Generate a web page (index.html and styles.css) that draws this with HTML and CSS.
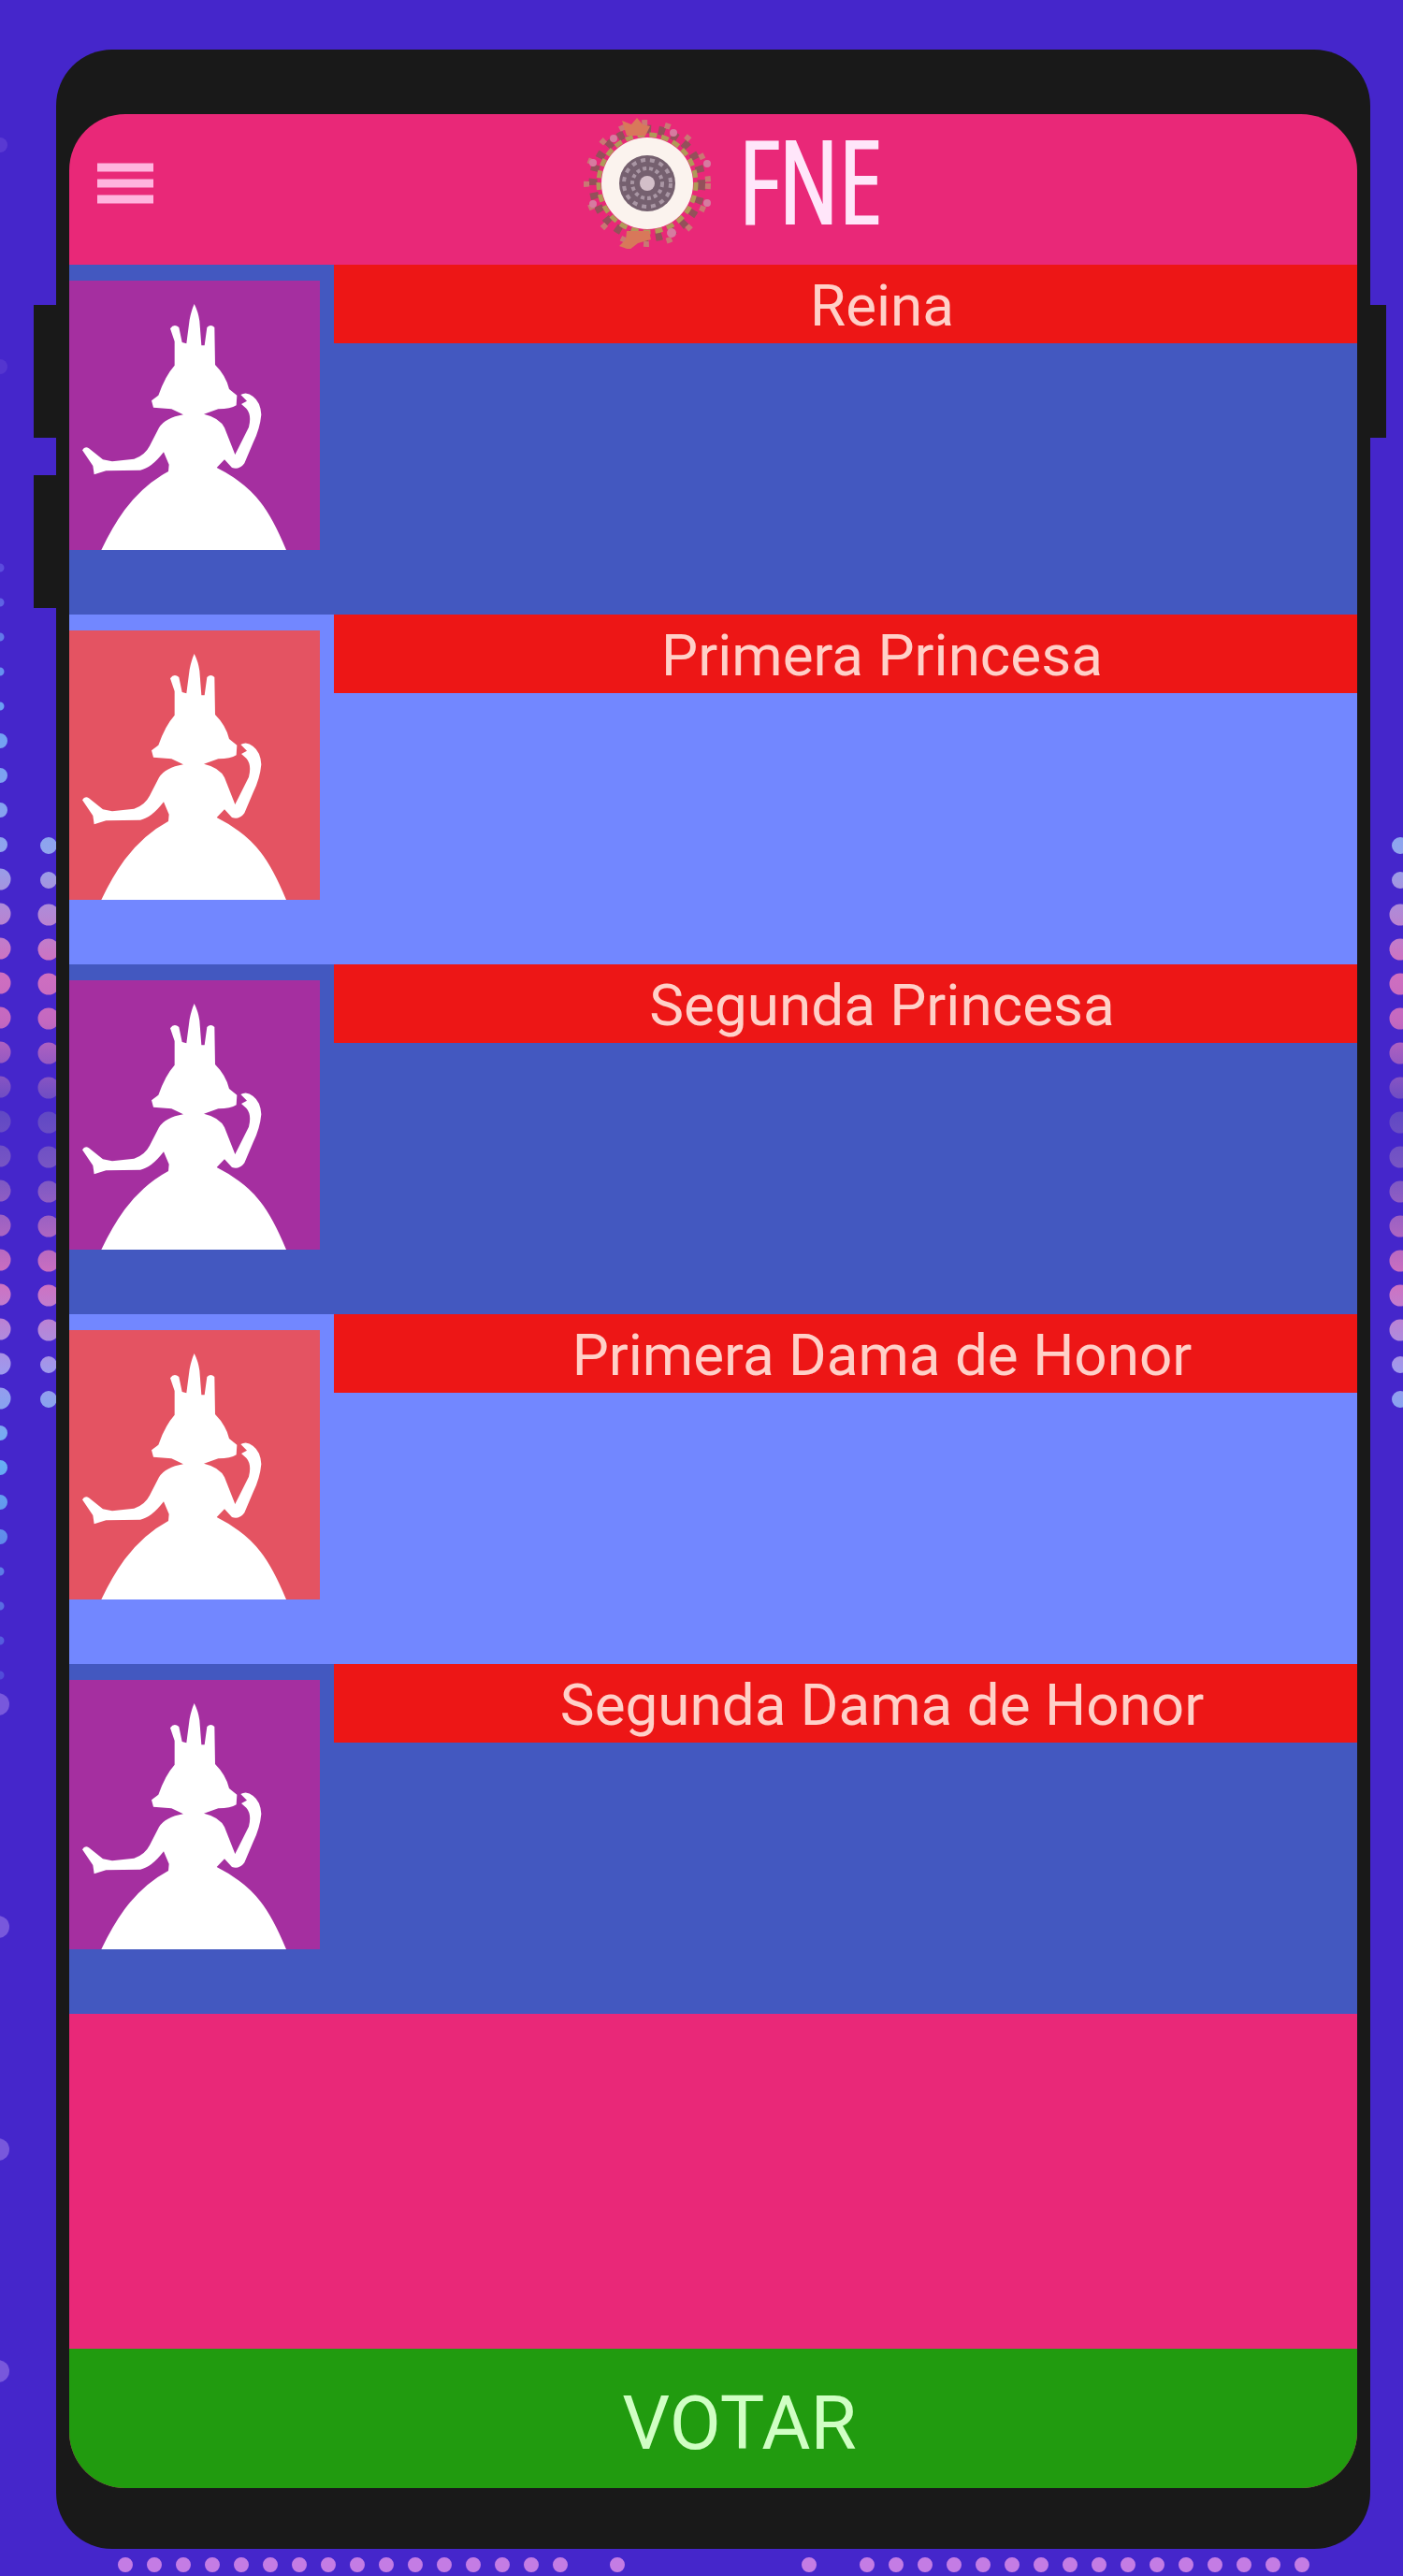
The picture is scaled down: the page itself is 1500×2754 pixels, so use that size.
FILE: index.html
```
<!DOCTYPE html>
<html lang="es">
<head>
  <meta charset="UTF-8" />
  <meta name="viewport" content="width=device-width, initial-scale=1.0"/>
  <title>FNE - Votar</title>
  <link rel="stylesheet" href="styles.css">
</head>
<body>
  <!-- Shared silhouette -->
  <svg class="defs" aria-hidden="true">
    <symbol id="queen" viewBox="42 90 804 864">
      <path fill="#fff" d="M443 165 Q456 190 460 220 L466 298 L476 298 L484 240 Q496 228 508 240 L510 360 Q545 395 555 438 L580 458 L578 490 Q560 502 520 502 L474 518 Q525 530 540 562 L574 648 L618 560 Q628 520 610 500 L594 486 L612 476 L592 456 Q612 444 632 462 Q656 480 658 520 Q654 565 632 610 L604 676 Q588 698 564 690 L540 664 L515 690 Q605 735 655 800 Q695 850 738 954 H145 Q180 880 220 825 Q280 745 360 702 L362 680 L345 640 Q305 692 270 698 L160 700 L122 712 L118 684 L84 634 Q92 620 105 628 L150 664 L180 670 L250 662 Q285 650 300 620 L330 562 Q350 530 408 520 L370 502 L312 497 L306 475 L328 458 Q350 395 380 362 L380 285 L366 244 Q378 226 394 240 L404 288 L418 292 L428 215 Q434 185 443 165 Z"/>
    </symbol>
  </svg>

  <!-- Dotted backdrop -->
  <svg class="dots dots-left" aria-hidden="true">
    <defs>
      <linearGradient id="fade" gradientUnits="userSpaceOnUse" x1="0" y1="600" x2="0" y2="1800">
        <stop offset="0" stop-color="#5a48dc"/>
        <stop offset="0.12" stop-color="#68a0f4"/>
        <stop offset="0.26" stop-color="#90a4ee"/>
        <stop offset="0.36" stop-color="#d070c0"/>
        <stop offset="0.41" stop-color="#c468c0"/>
        <stop offset="0.49" stop-color="#6048c4"/>
        <stop offset="0.55" stop-color="#7c58c4"/>
        <stop offset="0.64" stop-color="#d070c0"/>
        <stop offset="0.72" stop-color="#a098ec"/>
        <stop offset="0.8" stop-color="#68b0f4"/>
        <stop offset="1" stop-color="#5048d8"/>
      </linearGradient>
    </defs>
    <g fill="none" stroke="url(#fade)" stroke-linecap="round">
      <path stroke-width="9" stroke-dasharray="0 37" d="M0 607V760M0 1680V1800"/>
      <path stroke-width="16" stroke-dasharray="0 37" d="M0 792V904M0 1532V1650"/>
      <path stroke-width="23" stroke-dasharray="0 37" d="M0 940V1500"/>
      <path stroke-width="18" stroke-dasharray="0 37" d="M52 904V942M52 1459V1500"/>
      <path stroke-width="23" stroke-dasharray="0 37" d="M52 978V1430"/>
    </g>
    <g fill="#7858dc">
      <circle cx="0" cy="155" r="8" opacity="0.4"/>
      <circle cx="0" cy="392" r="8" opacity="0.3"/>
      <circle cx="-2" cy="1822" r="12"/>
      <circle cx="-2" cy="2060" r="12"/>
      <circle cx="-2" cy="2298" r="12"/>
      <circle cx="-2" cy="2535" r="12"/>
    </g>
  </svg>
  <svg class="dots dots-right" aria-hidden="true">
    <g fill="none" stroke="url(#fade)" stroke-linecap="round">
      <path stroke-width="18" stroke-dasharray="0 37" d="M17 904V942M17 1459V1500"/>
      <path stroke-width="23" stroke-dasharray="0 37" d="M17 978V1430"/>
    </g>
  </svg>
  <svg class="dots dots-bottom" viewBox="0 0 1500 29" aria-hidden="true">
    <path fill="none" stroke="#c47ce4" stroke-linecap="round" stroke-width="16" stroke-dasharray="0 31" d="M134 17H600M660 17H661M865 17H866M927 17H1394"/>
  </svg>

  <!-- Phone -->
  <div class="phone">
    <span class="side-key volume-up"></span>
    <span class="side-key volume-down"></span>
    <span class="side-key power"></span>

    <div class="screen">
      <header class="header">
        <button class="menu-btn" type="button" aria-label="Menú">
          <svg viewBox="0 0 60 46" aria-hidden="true">
            <path stroke="#ffb4de" stroke-width="9" d="M0 6H60M0 23H60M0 40H60"/>
          </svg>
        </button>
        <div class="brand">
          <svg class="logo" viewBox="-70 -70 140 140" aria-hidden="true">
            <g fill="none">
              <circle r="58" stroke="#94505a" stroke-width="9" stroke-dasharray="7 8"/>
              <circle r="65" stroke="#c97874" stroke-width="6" stroke-dasharray="6 19"/>
              <circle r="52" stroke="#b09a58" stroke-width="5" stroke-dasharray="8 5"/>
            </g>
            <g fill="#d8785a">
              <path d="M-27 -67L-17 -63L-11 -70L-5 -63L3 -61L-2 -51H-22Z"/>
              <path d="M-22 51H2L4 60L-10 64L-19 71L-30 67L-23 60Z"/>
            </g>
            <g fill="#d67ba0">
              <circle cx="-58" cy="-22" r="4"/>
              <circle cx="-58" cy="22" r="4"/>
              <circle cx="64" cy="-21" r="4"/>
              <circle cx="64" cy="21" r="4"/>
              <circle cx="28" cy="-54" r="4"/>
              <circle cx="26" cy="53" r="5"/>
              <circle cx="-36" cy="-48" r="4"/>
            </g>
            <circle r="49" fill="#fbf3ee"/>
            <circle r="30" fill="#75606f"/>
            <g fill="none" stroke="#a996a4">
              <circle r="25" stroke-width="4" stroke-dasharray="5 5"/>
              <circle r="16" stroke-width="4" stroke-dasharray="4 3"/>
            </g>
            <circle r="8" fill="#d3bfc9"/>
          </svg>
          <h1 class="title">FNE</h1>
        </div>
      </header>

      <main class="list">
        <section class="row">
          <svg class="photo" aria-hidden="true"><use href="#queen"/></svg>
          <h2 class="label">Reina</h2>
        </section>
        <section class="row">
          <svg class="photo" aria-hidden="true"><use href="#queen"/></svg>
          <h2 class="label">Primera Princesa</h2>
        </section>
        <section class="row">
          <svg class="photo" aria-hidden="true"><use href="#queen"/></svg>
          <h2 class="label">Segunda Princesa</h2>
        </section>
        <section class="row">
          <svg class="photo" aria-hidden="true"><use href="#queen"/></svg>
          <h2 class="label">Primera Dama de Honor</h2>
        </section>
        <section class="row">
          <svg class="photo" aria-hidden="true"><use href="#queen"/></svg>
          <h2 class="label">Segunda Dama de Honor</h2>
        </section>
      </main>

      <button class="vote-btn" type="button">VOTAR</button>
    </div>
  </div>
</body>
</html>
```
FILE: styles.css
```
/* ---------- Global Reset & Typography ---------- */
* {
  box-sizing: border-box;
  margin: 0;
  padding: 0;
}
body {
  position: relative;
  display: flex;
  min-height: 100vh;
  padding: 53px 35px 29px 60px;
  background-color: #4526cb; /* deep violet */
  font-family: Roboto, "Liberation Sans", sans-serif;
  overflow-x: hidden;
}
button {
  border: none;
  font-family: inherit;
  cursor: pointer;
}
.defs {
  position: absolute;
  width: 0;
  height: 0;
}

/* ---------- Dotted backdrop ---------- */
.dots {
  position: absolute;
  pointer-events: none;
}
.dots-left {
  top: 0;
  left: 0;
  width: 64px;
  height: 100%;
}
.dots-right {
  top: 0;
  right: 0;
  width: 20px;
  height: 100%;
}
.dots-bottom {
  bottom: 0;
  left: 0;
  width: 100%;
}

/* ---------- Phone ---------- */
.phone {
  position: relative;
  display: flex;
  flex: 1;
  padding: 69px 14px 65px;
  border-radius: 60px;
  background-color: #191919;
}
.side-key {
  position: absolute;
  width: 24px;
  height: 142px;
  background-color: #191919;
}
.volume-up {
  top: 273px;
  left: -24px;
}
.volume-down {
  top: 455px;
  left: -24px;
}
.power {
  top: 273px;
  right: -17px;
}
.screen {
  display: flex;
  flex: 1;
  flex-direction: column;
  border-radius: 60px;
  background-color: #e92878; /* hot pink */
  overflow: hidden;
}

/* ---------- Header ---------- */
.header {
  display: flex;
  align-items: center;
  height: 161px;
  padding: 0 50px 14px 30px;
}
.menu-btn {
  width: 60px;
  height: 46px;
  background: none;
}
.menu-btn svg {
  display: block;
  width: 100%;
}
.brand {
  display: flex;
  flex: 1;
  align-items: center;
  justify-content: center;
  gap: 28px;
}
.logo {
  width: 140px;
  height: 140px;
}
.title {
  padding-bottom: 8px;
  color: #ffe6fa;
  font-family: "Open Sans Condensed Light", "Open Sans Condensed", Roboto, sans-serif;
  font-size: 120px;
  font-weight: 300;
  line-height: 132px;
  -webkit-text-stroke: 4px #ffe6fa; /* thickens the light face */
}

/* ---------- Candidate rows ---------- */
.list {
  flex: 1;
}
.row {
  display: flex;
  align-items: flex-start;
  gap: 15px;
  height: 374px;
  background-color: #4358c0;
}
.row:nth-child(even) {
  background-color: #7287ff;
}
.photo {
  flex: none;
  width: 268px;
  height: 288px;
  margin-top: 17px;
  background-color: #a52fa0;
}
.row:nth-child(even) .photo {
  background-color: #e45362;
}
.label {
  flex: 1;
  padding: 4px 0 0 78px;
  background-color: #ed1616;
  color: #ffd0c8;
  font-size: 62px;
  font-weight: 400;
  line-height: 80px;
  text-align: center;
}

/* ---------- Vote button ---------- */
.vote-btn {
  height: 149px;
  padding: 10px 0 0 56px;
  background-color: #219b0f;
  color: #d0ffc4;
  font-size: 80px;
}
```
